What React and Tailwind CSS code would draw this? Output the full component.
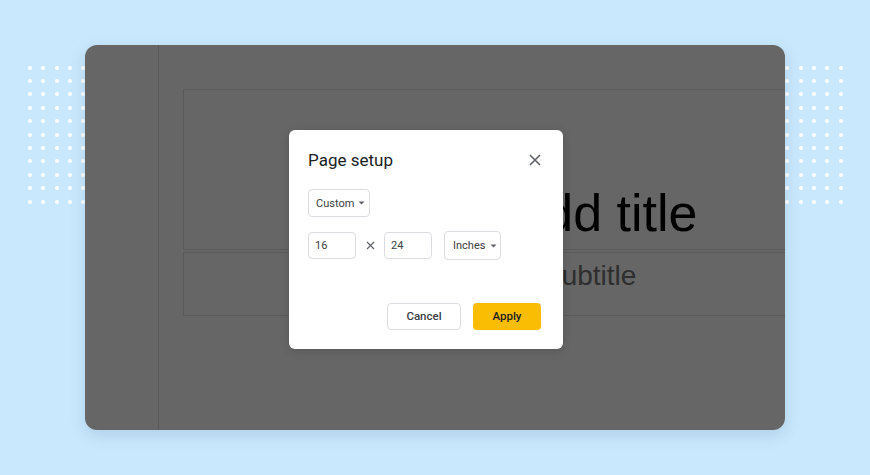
import React from "react";

function Dots({ className }) {
  const dots = Array.from({ length: 55 });
  return (
    <div className={`absolute grid grid-cols-[repeat(5,4px)] gap-x-[9.33px] gap-y-[9.4px] ${className}`}>
      {dots.map((_, i) => (
        <div key={i} className="w-[4px] h-[4px] rounded-full bg-white" />
      ))}
    </div>
  );
}

function Caret() {
  return (
    <svg width="7" height="4" viewBox="0 0 7 4" className="shrink-0">
      <polygon points="0.5,0.5 6.5,0.5 3.5,3.5" fill="#5f6368" />
    </svg>
  );
}

export default function App() {
  return (
    <div className="relative w-[870px] h-[475px] overflow-hidden bg-[#c9e8fd] pt-[45px] pl-[85px]">
      <Dots className="left-[28px] top-[65.7px]" />
      <Dots className="left-[785.3px] top-[65.7px]" />

      {/* Slides editor card (dimmed) */}
      <div className="relative w-[700px] h-[385px] rounded-[12px] bg-[#666666] overflow-hidden flex shadow-[0_5px_16px_rgba(40,80,120,0.16)]">
        <div className="w-[74px] h-full shrink-0 border-r border-[#5a5a5a]" />
        <div className="pl-[24px] pt-[44px] flex flex-col shrink-0">
          <div className="w-[662px] h-[161px] border border-[#5a5a5a] flex flex-col justify-end items-center pb-[10px]">
            <span className="font-['Liberation_Sans',Arial,sans-serif] text-[52px] leading-none text-black whitespace-nowrap">
              Click to add title
            </span>
          </div>
          <div className="mt-[2px] w-[662px] h-[64px] border border-[#5a5a5a] flex justify-center pt-[9px] pl-[2px]">
            <span className="font-['Liberation_Sans',Arial,sans-serif] text-[28px] leading-none text-[#2e2e2e] whitespace-nowrap">
              Click to add subtitle
            </span>
          </div>
        </div>
      </div>

      {/* Page setup dialog */}
      <div className="absolute left-[289px] top-[130px] w-[274px] h-[219px] bg-white rounded-[6px] pl-[19px] pr-[22px] pt-[20px] flex flex-col font-['Roboto','Noto_Sans',sans-serif] shadow-[0_2px_10px_rgba(0,0,0,0.15)]">
        <div className="flex items-center justify-between h-[20px]">
          <span className="text-[17px] leading-[20px] text-[#202124]">Page setup</span>
          <svg width="12" height="12" viewBox="0 0 12 12">
            <path d="M1 1L11 11M11 1L1 11" stroke="#5f6368" strokeWidth="1.6" />
          </svg>
        </div>

        <div className="mt-[19px] w-[62px] h-[28px] border border-[#dadce0] rounded-[4px] flex items-center pl-[7px] gap-[4px]">
          <span className="text-[11px] text-[#3c4043] leading-none">Custom</span>
          <Caret />
        </div>

        <div className="mt-[14px] flex items-center h-[29px]">
          <div className="w-[48px] h-[27px] border border-[#dadce0] rounded-[4px] flex items-center pl-[6px]">
            <span className="text-[11px] text-[#3c4043] leading-none">16</span>
          </div>
          <div className="w-[28px] flex justify-center">
            <svg width="9" height="9" viewBox="0 0 9 9">
              <path d="M1 1L8 8M8 1L1 8" stroke="#5f6368" strokeWidth="1.2" />
            </svg>
          </div>
          <div className="w-[48px] h-[27px] border border-[#dadce0] rounded-[4px] flex items-center pl-[6px]">
            <span className="text-[11px] text-[#3c4043] leading-none">24</span>
          </div>
          <div className="ml-[12px] w-[57px] h-[29px] border border-[#dadce0] rounded-[4px] flex items-center pl-[8px] gap-[5px]">
            <span className="text-[11px] text-[#3c4043] leading-none">Inches</span>
            <Caret />
          </div>
        </div>

        <div className="mt-[43px] flex justify-end gap-[12px]">
          <div className="w-[74px] h-[27px] border border-[#dadce0] rounded-[4px] flex items-center justify-center">
            <span className="text-[11.5px] font-medium text-[#3c4043] leading-none">Cancel</span>
          </div>
          <div className="w-[68px] h-[27px] bg-[#fbbc04] rounded-[4px] flex items-center justify-center">
            <span className="text-[11.5px] font-medium text-[#202124] leading-none">Apply</span>
          </div>
        </div>
      </div>
    </div>
  );
}
